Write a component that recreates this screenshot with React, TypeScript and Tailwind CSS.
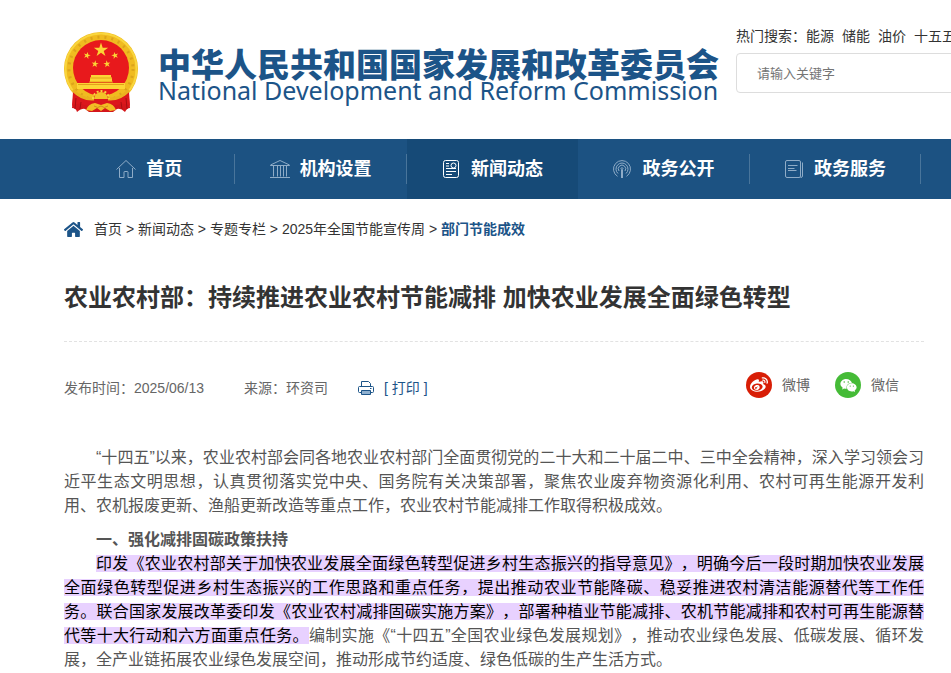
import type { ReactNode } from 'react';
import { FaHome, FaWeibo, FaWeixin } from 'react-icons/fa';

interface NavItem {
  label: string;
  icon: ReactNode;
  active?: boolean;
}

const hotWords = ['能源', '储能', '油价', '十五五'];

const crumbs = ['首页', '新闻动态', '专题专栏', '2025年全国节能宣传周'];

function LineIcon({ children }: { children: ReactNode }) {
  return (
    <svg viewBox="0 0 20 20" className="h-5 w-5 shrink-0" fill="none" stroke="currentColor" aria-hidden="true">
      {children}
    </svg>
  );
}

const navItems: NavItem[] = [
  {
    label: '首页',
    icon: (
      <LineIcon>
        <path d="M.5 10.5 10 1.5l9.500 9M3.500 9v9.500h4.500v-5.500q0-.5.5-.5h3q.5 0 .5.5v5.500h4.500V9" />
      </LineIcon>
    ),
  },
  {
    label: '机构设置',
    icon: (
      <LineIcon>
        <path d="M.5 6 10 1.500 19.500 6v.5H.5zM3.500 6.500v11M7.500 6.500v11M10.500 6.500v11M13.500 6.500v11M16.500 6.500v11M0 18.500h20" />
      </LineIcon>
    ),
  },
  {
    label: '新闻动态',
    active: true,
    icon: (
      <LineIcon>
        <rect x="2.500" y="1.500" width="15" height="17" rx="2" />
        <path d="M5 4.500h3M5 7h3M5 9.500h10M5 12.500h10M5 15.500h6" />
        <circle cx="12.500" cy="6.500" r="2.500" />
      </LineIcon>
    ),
  },
  {
    label: '政务公开',
    icon: (
      <LineIcon>
        <path d="M5.500 17.300a8.500 8.500 0 1 1 9 0M6 14.500a6 6 0 1 1 8 0M7 12a3.700 3.700 0 1 1 6 0" />
        <path d="M9.500 19V10.500a1 1 0 1 1 1 0V19" />
      </LineIcon>
    ),
  },
  {
    label: '政务服务',
    icon: (
      <LineIcon>
        <rect x="1.500" y="1.500" width="15" height="17" rx="1.500" />
        <path d="M18.500 3.500v13.500q0 1.500-2 1.500M4 6.500h9.500M4 9.500h6.500M4 11.500h8.500" />
      </LineIcon>
    ),
  },
];

function Emblem() {
  const star = 'M0-1 .2245-.309.951-.309.363.118.588.809 0 .382-.588.809-.363.118-.951-.309-.2245-.309z';
  return (
    <svg viewBox="0 0 74 80" className="h-20 w-[74px] shrink-0" role="img" aria-label="国徽">
      <path d="M10 56 8 76q4 0 5 4 5-4 8-3l4 3h24l4-3q4-1 8 3 2-4 5-4l-2-20z" fill="#d4161b" />
      <circle cx="37" cy="37" r="37" fill="#f0bb20" />
      <circle cx="37" cy="37" r="35.500" fill="none" stroke="#f9d63e" strokeWidth="2" />
      <circle cx="37" cy="37" r="32" fill="none" stroke="#dca41b" strokeWidth="3" strokeDasharray="2 5" />
      <circle cx="37" cy="36" r="28" fill="#e8191c" />
      <g fill="#fcd535">
        <path d={star} transform="translate(37 18) scale(7.500)" />
        <path d={star} transform="translate(23 23.500) rotate(15) scale(3.700)" />
        <path d={star} transform="translate(51 23.500) rotate(-15) scale(3.700)" />
        <path d={star} transform="translate(31 32) rotate(8) scale(3.700)" />
        <path d={star} transform="translate(43 32) rotate(-8) scale(3.700)" />
        <path d="M27 43h20v2l1 1v4h-22v-4l1-1z" />
        <path d="M13 51h48v6H13z" />
      </g>
      <path d="M26 46h22M25 50h24M14 52.500h46" fill="none" stroke="#e2a21a" />
      {/* sash on both sides of the gear */}
      <path d="M9 60q8 8 20 7l2-5h12l2 5q12 1 20-7l1 14q-6-4-12-1l-6 1H26l-6-1q-6-3-12 1z" fill="#dc171c" />
      <path d="M12 66l-1 11M17 70l-1 7M62 66l1 11M57 70l1 7" stroke="#a80d12" />
      <path d="M9 58q9 10 21 9M65 58q-9 10-21 9" fill="none" stroke="#eab120" strokeWidth="3" />
      <path d="M30 67a7 7 0 1 1 14 0z" fill="#f3c128" />
      <path d="M29 67a8 8 0 1 1 16 0" fill="none" stroke="#f9d63e" strokeWidth="2" strokeDasharray="2 2" />
      <path d="M22 78q2-6 9-7l6 2 6-2q7 1 9 7l-6 1-5-3-4 3-4-3-5 3z" fill="#f3bd25" />
      <path d="M30 74q4 3 7 0 3 3 7 0" fill="none" stroke="#d0901a" />
    </svg>
  );
}

function PrinterIcon() {
  return (
    <svg viewBox="0 0 16 16" className="h-4 w-4" fill="none" stroke="currentColor" aria-hidden="true">
      <path d="M3.500 6.500v-5h7l2 2v3M3.500 12.500h-2a1 1 0 0 1-1-1v-4q0-1 1-1h13q1 0 1 1v4a1 1 0 0 1-1 1h-2" />
      <path d="M3.500 10.500h9v4h-9z" fill="#8fb0cf" />
      <path d="M12 8.500h1.500" />
    </svg>
  );
}

export default function App() {
  return (
    <div className="min-h-screen overflow-hidden bg-white font-['Liberation_Sans','Noto_Sans_CJK_SC',sans-serif] text-sm text-[#333] [text-spacing-trim:space-all]">
      <header className="flex h-[139px] pl-16">
        <a href="#" className="flex shrink-0 items-start gap-5 pt-8 text-[#1c5488]">
          <Emblem />
          <span className="flex flex-col pt-[14px]">
            <span className="font-['Noto_Sans_CJK_SC',sans-serif] text-[33px] leading-[34px] font-black whitespace-nowrap">
              中华人民共和国国家发展和改革委员会
            </span>
            <span className="font-['Noto_Sans','Open_Sans',sans-serif] text-[25px] leading-5 whitespace-nowrap">
              National Development and Reform Commission
            </span>
          </span>
        </a>
        <div className="ml-[17px] min-w-0 flex-1 pt-[26px]">
          <p className="flex gap-2 leading-5 whitespace-nowrap">
            <span className="-mr-2">热门搜索：</span>
            {hotWords.map((word) => (
              <a key={word} href="#">
                {word}
              </a>
            ))}
          </p>
          <input
            type="search"
            aria-label="站内搜索"
            placeholder="请输入关键字"
            className="mt-[7px] h-10 w-full min-w-80 rounded border border-[#ddd] px-5 text-[13px] outline-none placeholder:text-[#757575]"
          />
        </div>
      </header>

      <nav className="bg-[#1c5282] pl-16">
        <ul className="grid min-w-[1200px] grid-cols-7">
          {navItems.map((item) => (
            <li key={item.label} className={`flex h-[60px] items-center ${item.active ? 'bg-[#164a77]' : ''}`}>
              <a href="#" className="flex flex-1 items-center justify-center gap-[10px] text-lg font-bold text-white">
                <span className={item.active ? 'text-white' : 'text-[#8facc7]'}>{item.icon}</span>
                {item.label}
              </a>
              <span className={`h-[30px] w-px ${item.active ? '' : 'bg-[#49759b]'}`} />
            </li>
          ))}
        </ul>
      </nav>

      <main className="pr-[27px] pl-16">
        <div className="flex h-[60px] items-center">
          <FaHome className="mr-[11px] size-[19px] text-[#1c5488]" aria-hidden="true" />
          <p>
            {crumbs.map((crumb) => (
              <span key={crumb}>
                <a href="#">{crumb}</a>
                {' > '}
              </span>
            ))}
            <a href="#" className="font-bold text-[#1c5488]">
              部门节能成效
            </a>
          </p>
        </div>

        <h1 className="border-b border-dashed border-[#e2e2e2] pt-[21px] pb-[25px] text-2xl leading-9 font-bold">
          农业农村部：持续推进农业农村节能减排 加快农业发展全面绿色转型
        </h1>

        <div className="flex items-center justify-between pt-[30px] pr-[25px] text-[#666]">
          <div className="flex items-center pt-[6px]">
            <span className="mr-10">发布时间：2025/06/13</span>
            <span className="mr-[30px]">来源：环资司</span>
            <button type="button" className="flex items-center gap-[10px] text-[#1c5488]">
              <PrinterIcon />
              [ 打印 ]
            </button>
          </div>
          <div className="flex gap-[25px]">
            <a href="#" className="flex items-center gap-[10px]">
              <span className="flex size-[26px] items-center justify-center rounded-full bg-[#d81e06] text-white">
                <FaWeibo className="size-[18px]" />
              </span>
              微博
            </a>
            <a href="#" className="flex items-center gap-[10px]">
              <span className="flex size-[26px] items-center justify-center rounded-full bg-[#45bb37] text-white">
                <FaWeixin className="size-[17px]" />
              </span>
              微信
            </a>
          </div>
        </div>

        <article className="pt-12 text-justify indent-8 text-base leading-6 text-[#555]">
          <p>
            “十四五”以来，农业农村部会同各地农业农村部门全面贯彻党的二十大和二十届二中、三中全会精神，深入学习领会习近平生态文明思想，认真贯彻落实党中央、国务院有关决策部署，聚焦农业废弃物资源化利用、农村可再生能源开发利用、农机报废更新、渔船更新改造等重点工作，农业农村节能减排工作取得积极成效。
          </p>
          <h2 className="mt-[10px] font-bold">一、强化减排固碳政策扶持</h2>
          <p>
            <mark className="bg-[#e8d1ff] text-black">
              印发《农业农村部关于加快农业发展全面绿色转型促进乡村生态振兴的指导意见》，明确今后一段时期加快农业发展全面绿色转型促进乡村生态振兴的工作思路和重点任务，提出推动农业节能降碳、稳妥推进农村清洁能源替代等工作任务。联合国家发展改革委印发《农业农村减排固碳实施方案》，部署种植业节能减排、农机节能减排和农村可再生能源替代等十大行动和六方面重点任务。
            </mark>
            编制实施《“十四五”全国农业绿色发展规划》，推动农业绿色发展、低碳发展、循环发展，全产业链拓展农业绿色发展空间，推动形成节约适度、绿色低碳的生产生活方式。
          </p>
        </article>
      </main>
    </div>
  );
}
